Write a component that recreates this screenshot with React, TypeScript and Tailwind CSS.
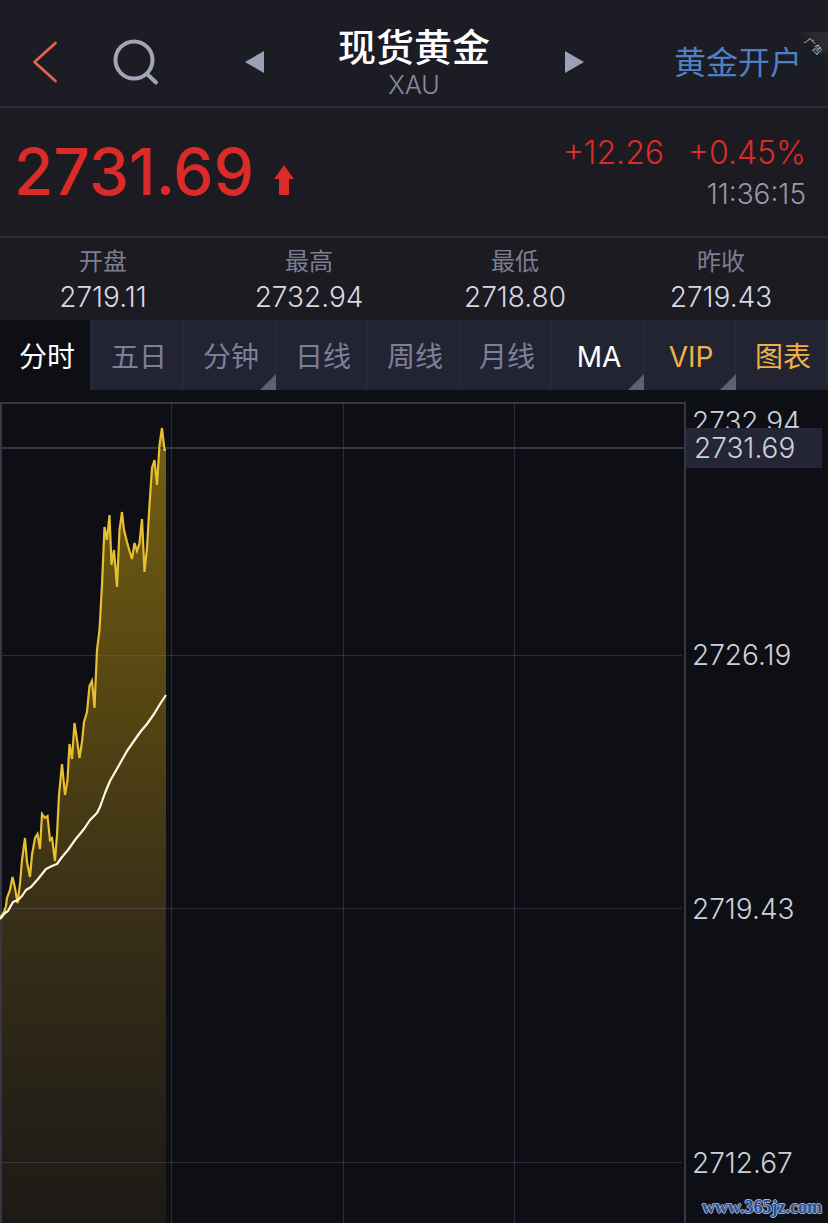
import { useState } from 'react';
import clsx from 'clsx';

interface Stat {
  label: string;
  value: string;
}

interface Tab {
  label: string;
  tone: string;
  hasMenu?: boolean;
}

const stats: Stat[] = [
  { label: '开盘', value: '2719.11' },
  { label: '最高', value: '2732.94' },
  { label: '最低', value: '2718.80' },
  { label: '昨收', value: '2719.43' },
];

const tabs: Tab[] = [
  { label: '分时', tone: 'text-[#7e7f9a]' },
  { label: '五日', tone: 'text-[#7e7f9a]' },
  { label: '分钟', tone: 'text-[#7e7f9a]', hasMenu: true },
  { label: '日线', tone: 'text-[#7e7f9a]' },
  { label: '周线', tone: 'text-[#7e7f9a]' },
  { label: '月线', tone: 'text-[#7e7f9a]' },
  { label: 'MA', tone: 'text-white', hasMenu: true },
  { label: 'VIP', tone: 'text-[#f0b04a]', hasMenu: true },
  { label: '图表', tone: 'text-[#f0b04a]' },
];

const axisPrices = ['2726.19', '2719.43', '2712.67'];

const pricePoints =
  '0,918 4,912 6,906 7,898 10,890 12.5,877 15,888 17.5,903 20,884 22,860 25,838 27,862 30,877 32,855 35,838 37.5,834 40,849 42,814 45,818 47.5,816 50,840 52,838 55,861 57,835 59,795 62,764 65,795 67.5,780 69.5,744 72,759 74.5,723 77,740 79.5,758 82,742 84,722 87,712 89.5,686 92,681 94.5,708 97,650 99.5,630 102,585 104.5,527 107,540 109.5,515 111.5,565 114,550 117,587 119.5,530 122,512 124,530 127,542 129.5,551 132,559 134.5,543 137,551 139.5,543 142,519 144.5,572 147,548 149.5,505 152,468 154.5,460 157,485 159.5,445 162,428 164.5,450 166,450';

const averagePoints =
  '0,919 5,913 8,911 13,902 18,900 22,896 26,890 31,887 38,879 46,869 52,866 57,864 62,857 68,850 75,840 84,829 90,820 97,813 100,807 105,793 110,781 118,767 127,751 136,738 141,731 147,724 154,714 160,704 166,695';

function Header() {
  return (
    <header className="relative grid h-[108px] grid-cols-[1fr_340px_1fr] items-center border-b-2 border-[#2b2c38] bg-[#1c1c25]">
      <div className="flex items-center gap-[52px] pt-[18px] pl-8">
        <button type="button" aria-label="返回">
          <svg className="h-[44px] w-[26px]" viewBox="0 0 26 44" fill="none" stroke="#e8604c" strokeWidth="2.8" strokeLinecap="round" strokeLinejoin="round">
            <path d="M23.5 3 2.5 22l21 19" />
          </svg>
        </button>
        <button type="button" aria-label="搜索">
          <svg className="size-12" viewBox="0 0 48 48" fill="none" stroke="#a3a4b8" strokeWidth="4" strokeLinecap="round">
            <circle cx="24" cy="22" r="18.5" />
            <path d="M37 36l9 8.500" />
          </svg>
        </button>
      </div>

      <div className="flex items-center justify-between pt-[18px]">
        <button type="button" aria-label="上一个">
          <svg className="h-[22px] w-5" viewBox="0 0 20 22" fill="#9c9fb5">
            <path d="M1 11 20 0v22z" />
          </svg>
        </button>
        <div className="text-center">
          <h1 className="text-[38px] leading-[46px] font-medium text-white">现货黄金</h1>
          <p className="text-[25px] leading-[30px] font-light text-[#8b8c9e]">XAU</p>
        </div>
        <button type="button" aria-label="下一个">
          <svg className="h-[22px] w-5" viewBox="0 0 20 22" fill="#9c9fb5">
            <path d="M20 11 1 0v22z" />
          </svg>
        </button>
      </div>

      <a href="#open" className="justify-self-end pt-5 pr-[26px] text-[32px] leading-10 text-[#5180c2]">黄金开户</a>
      <span className="absolute top-8 right-0 flex size-7 items-center justify-center bg-linear-to-bl from-[#2b2b31] from-30% to-transparent to-55% text-[10px] leading-none text-[#b9b9be]">
        <span className="rotate-45 whitespace-nowrap">广告</span>
      </span>
    </header>
  );
}

function Quote() {
  return (
    <section className="flex h-[130px] justify-between border-b-2 border-[#2b2c38] bg-[#1c1b21] pr-[22px] pl-3.5 font-light">
      <div className="flex items-center gap-5 text-[#dc2a28]">
        <span className="text-[64px] leading-none font-medium">2731.69</span>
        <svg className="mt-4 h-[30px] w-5" viewBox="0 0 20 30" fill="currentColor" aria-hidden="true">
          <path d="M10 0 20 14h-5v16H5V14H0z" />
        </svg>
      </div>
      <div className="flex flex-col items-end pt-6">
        <p className="flex gap-6 text-[32px] leading-[42px] text-[#dc2a28]">
          <span>+12.26</span>
          <span>+0.45%</span>
        </p>
        <time className="text-[28px] leading-10 text-[#9899a8]">11:36:15</time>
      </div>
    </section>
  );
}

function Stats() {
  return (
    <dl className="grid h-[82px] grid-cols-4 bg-[#1c1b21] pt-[9px] pr-1 text-center">
      {stats.map((s) => (
        <div key={s.label}>
          <dt className="text-2xl leading-[30px] text-[#7d7e92]">{s.label}</dt>
          <dd className="text-[28px] leading-10 font-light text-[#d8d8e4]">{s.value}</dd>
        </div>
      ))}
    </dl>
  );
}

function Tabs() {
  const [active, setActive] = useState('分时');

  return (
    <nav className="grid h-[70px] grid-cols-9 bg-[#232432]">
      {tabs.map((t) => (
        <button
          key={t.label}
          type="button"
          onClick={() => setActive(t.label)}
          className={clsx(
            'relative border-r-2 border-[#272836] pt-1 pl-1 text-[28px] leading-10',
            t.label === active ? 'bg-[#0e0f14] text-white' : t.tone,
          )}
        >
          {t.label}
          {t.hasMenu && (
            <svg className="absolute -right-0.5 bottom-0 size-4" viewBox="0 0 16 16" fill="#5e6079" aria-hidden="true">
              <path d="M16 0v16H0z" />
            </svg>
          )}
        </button>
      ))}
    </nav>
  );
}

function Chart() {
  return (
    <section className="flex items-start pt-3">
      <svg className="h-auto min-w-0 flex-1" viewBox="0 402 686 821" fill="none" role="img" aria-label="分时走势">
        <defs>
          <linearGradient id="area" gradientUnits="userSpaceOnUse" x1="0" y1="428" x2="0" y2="1223">
            <stop offset="0" stopColor="#745f12" />
            <stop offset="0.35" stopColor="#544512" />
            <stop offset="0.6" stopColor="#3a3018" />
            <stop offset="0.85" stopColor="#262117" />
            <stop offset="1" stopColor="#1d1a16" />
          </linearGradient>
        </defs>
        <polygon points={`${pricePoints} 166,1223 0,1223`} fill="url(#area)" />
        <g stroke="#78799a" strokeOpacity="0.28" strokeWidth="1.2">
          <path d="M171.500 403V1223M343.500 403V1223M514.500 403V1223" />
          <path d="M0 655.500H682M0 908.500H682M0 1162.500H682" />
        </g>
        <path d="M1 1223V403H685V1223" stroke="#363744" strokeWidth="2" />
        <path d="M0 448H685" stroke="#363744" strokeWidth="2" />
        <polyline points={pricePoints} stroke="#e8bf30" strokeWidth="2.2" strokeLinejoin="miter" />
        <polyline points={averagePoints} stroke="#fffbe6" strokeWidth="2.2" strokeLinejoin="round" />
      </svg>

      <div className="relative w-[142px] text-[28px] leading-8 font-light text-[#cfcfdb]">
        <ul className="pl-1.5">
          <li className="h-[237px] pt-1">2732.94</li>
          {axisPrices.map((p) => (
            <li key={p} className="h-[254px] last:h-8">{p}</li>
          ))}
        </ul>
        <output className="absolute top-[26px] right-1.5 left-0 bg-[#252635] pl-2 leading-10">2731.69</output>
      </div>
    </section>
  );
}

export default function App() {
  return (
    <main className="relative min-h-screen overflow-hidden bg-[#0e0f14] font-['Inter','Noto_Sans_CJK_SC',sans-serif]">
      <Header />
      <Quote />
      <Stats />
      <Tabs />
      <Chart />
      <a
        href="#site"
        className="absolute right-1.5 bottom-1 font-['Liberation_Serif',serif] text-lg leading-6 font-bold text-[#27509a] [text-shadow:1px_0_#a9b1c0,-1px_0_#a9b1c0,0_1px_#a9b1c0,0_-1px_#a9b1c0]"
      >
        www.365jz.com
      </a>
    </main>
  );
}
